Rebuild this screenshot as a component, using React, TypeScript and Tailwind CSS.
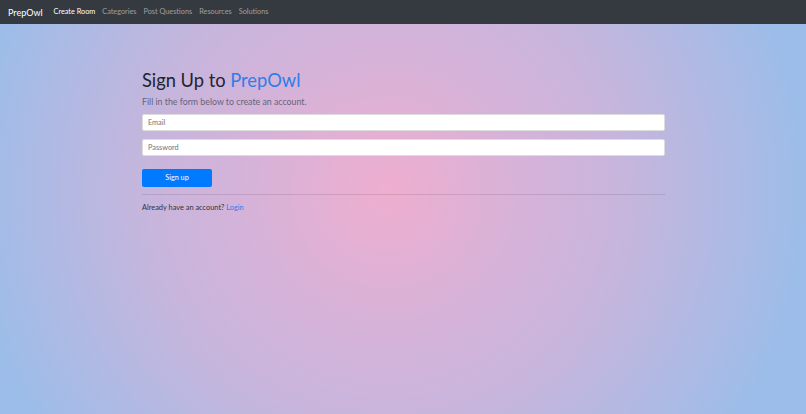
export default function App() {
  const links = ["Categories", "Post Questions", "Resources", "Solutions"];

  return (
    <div className="min-h-screen flex flex-col font-['Lato','Noto_Sans',sans-serif] text-[#212529]">
      {/* Top nav */}
      <nav className="h-6 bg-[#343a40] flex items-center px-2 gap-[11px]">
        <span className="text-white text-[9px] leading-none">PrepOwl</span>
        <div className="flex items-center gap-[7px] text-[7.3px] leading-none">
          <a className="text-white">Create Room</a>
          {links.map((l) => (
            <a key={l} className="text-white/50">
              {l}
            </a>
          ))}
        </div>
      </nav>

      {/* Sign up form */}
      <main className="flex-1 bg-[radial-gradient(circle_420px_at_48%_43%,#eeaecf_0%,#d8b2d8_30%,#c8b5dc_55%,#9cbde9_100%)]">
        <div className="w-[523px] ml-[142px] pt-[44px]">
          <h1 className="text-[18.3px] font-normal leading-[24px] text-[#23232f]">
            Sign Up to <span className="text-[#2f7ee8]">PrepOwl</span>
          </h1>
          <p className="text-[8.8px] font-normal text-[#66637a] leading-[12px] mt-[4px]">
            Fill in the form below to create an account.
          </p>
          <div className="mt-[6px] flex flex-col gap-2">
            <input
              placeholder="Email"
              className="h-[17px] w-full bg-white rounded-[2px] border border-[#ddd] px-[5px] text-[7.3px] placeholder:text-[#6c757d] outline-none"
            />
            <input
              placeholder="Password"
              type="password"
              className="h-[17px] w-full bg-white rounded-[2px] border border-[#ddd] px-[5px] text-[7.3px] placeholder:text-[#6c757d] outline-none"
            />
          </div>
          <button className="mt-[13px] w-[70px] h-[18px] bg-[#007bff] rounded-[2px] text-white text-[7.3px]">
            Sign up
          </button>
          <hr className="mt-[7px] border-t border-black/10" />
          <p className="mt-[7px] text-[7.4px] text-[#333]">
            Already have an account? <a className="text-[#2f7de6]">Login</a>
          </p>
        </div>
      </main>
    </div>
  );
}
